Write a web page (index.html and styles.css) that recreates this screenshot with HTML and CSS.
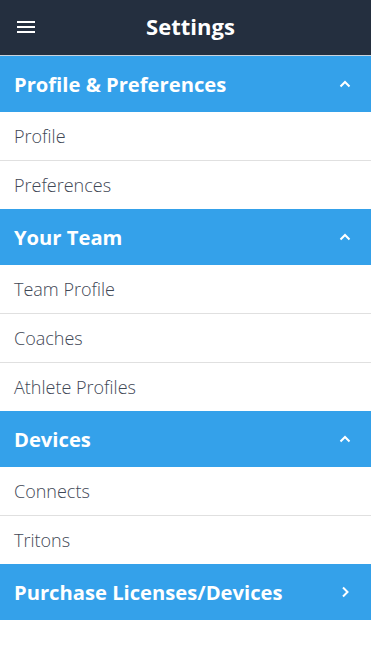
FILE: index.html
```html
<!DOCTYPE html>
<html lang="en">
<head>
    <meta charset="UTF-8">
    <meta name="viewport" content="width=device-width, initial-scale=1.0">
    <title>Settings</title>
    <link rel="stylesheet" href="styles.css">
</head>
<body>
    <header class="topbar">
        <button class="menu-btn" aria-label="Menu">
            <span></span><span></span><span></span>
        </button>
        <h1>Settings</h1>
    </header>

    <section class="group">
        <div class="group-head">
            <span>Profile &amp; Preferences</span>
            <svg class="chev" viewBox="0 0 12 8"><path d="M1.5 6.5 6 2l4.5 4.5"/></svg>
        </div>
        <a class="item" href="#">Profile</a>
        <a class="item" href="#">Preferences</a>
    </section>

    <section class="group">
        <div class="group-head">
            <span>Your Team</span>
            <svg class="chev" viewBox="0 0 12 8"><path d="M1.5 6.5 6 2l4.5 4.5"/></svg>
        </div>
        <a class="item" href="#">Team Profile</a>
        <a class="item" href="#">Coaches</a>
        <a class="item" href="#">Athlete Profiles</a>
    </section>

    <section class="group">
        <div class="group-head">
            <span>Devices</span>
            <svg class="chev" viewBox="0 0 12 8"><path d="M1.5 6.5 6 2l4.5 4.5"/></svg>
        </div>
        <a class="item" href="#">Connects</a>
        <a class="item" href="#">Tritons</a>
    </section>

    <section class="group">
        <div class="group-head">
            <span>Purchase Licenses/Devices</span>
            <svg class="chev chev-right" viewBox="0 0 8 12"><path d="M2 1.5 6.5 6 2 10.5"/></svg>
        </div>
    </section>
</body>
</html>
```

FILE: styles.css
```css
body {
    margin: 0;
    font-family: "Open Sans", Arial, sans-serif;
    background: #fff;
}
.topbar {
    height: 56px;
    box-sizing: border-box;
    padding: 0 0 3px 10px;
    background-color: #242f3f;
    border-bottom: 1px solid #c9d3dc;
    display: flex;
    align-items: center;
    justify-content: center;
    position: relative;
}
.topbar h1 {
    margin: 0;
    color: #fff;
    font-size: 22px;
    font-weight: 700;
}
.menu-btn {
    position: absolute;
    left: 17px;
    top: 21px;
    width: 18px;
    padding: 0;
    background: none;
    border: none;
    display: flex;
    flex-direction: column;
    gap: 3px;
}
.menu-btn span {
    display: block;
    height: 2px;
    background: #fff;
}
.group-head {
    height: 56px;
    background-color: #34a1ea;
    color: #fff;
    font-size: 20.2px;
    font-weight: 700;
    display: flex;
    align-items: center;
    justify-content: space-between;
    padding: 0 20px 0 14px;
}
.chev {
    width: 12px;
    height: 8px;
    fill: none;
    stroke: #fff;
    stroke-width: 2;
}
.chev-right {
    width: 8px;
    height: 12px;
    margin-right: 2px;
}
.item {
    display: flex;
    align-items: center;
    height: 48px;
    padding-left: 14px;
    color: #3f4856;
    font-size: 18px;
    font-weight: 300;
    text-decoration: none;
    border-bottom: 1px solid #e0e0e0;
}
.item:last-child {
    border-bottom: none;
}
```
